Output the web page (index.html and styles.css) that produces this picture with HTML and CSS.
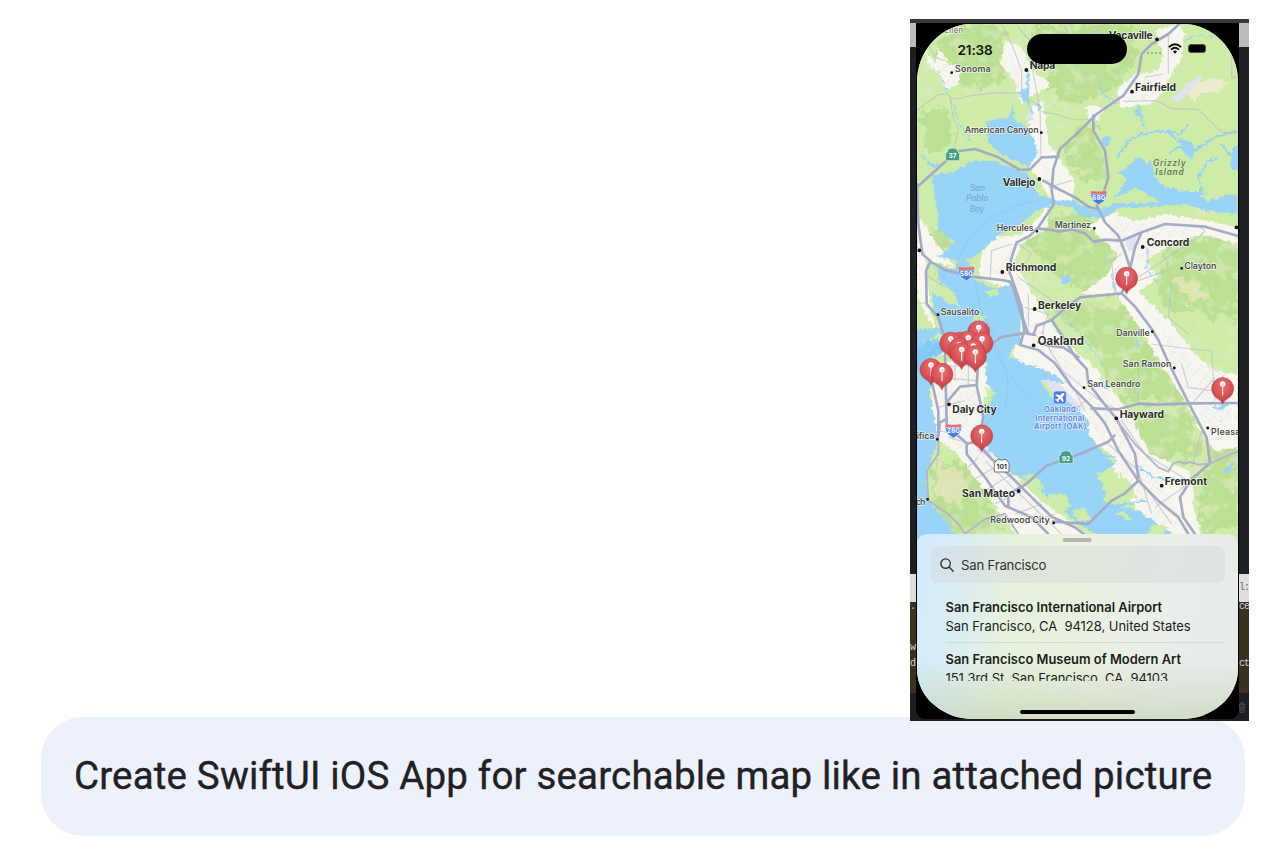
FILE: index.html
```html
<!DOCTYPE html>
<html lang="en">
<head>
<meta charset="utf-8">
<title>Searchable map prompt</title>
<link rel="stylesheet" href="styles.css">
</head>
<body>
<main class="conversation">
  <figure class="attachment">
    <span class="code c1">l:</span><span class="code c2">ce</span><span class="code c3">ct</span>
    <span class="code c4">.</span><span class="code c5">w</span><span class="code c6">d</span>
    <svg class="trash" viewBox="0 0 10 14"><path d="M1 3h8M3.500 3V1h3v2M2 3l.5 10h5L8 3M4 5v6M6 5v6"/></svg>
    <div class="phone">
      <div class="screen">
        <svg class="map" viewBox="36 30 963 1545" preserveAspectRatio="none">
          <defs>
            <filter id="coast" x="0" y="0" width="1044" height="1600" filterUnits="userSpaceOnUse">
              <feTurbulence type="fractalNoise" baseFrequency=".07" numOctaves="3" seed="4"/>
              <feDisplacementMap in="SourceGraphic" scale="18" xChannelSelector="R" yChannelSelector="G"/>
              <feGaussianBlur stdDeviation=".8"/>
            </filter>
            <filter id="hills" x="0" y="0" width="1044" height="1600" filterUnits="userSpaceOnUse">
              <feTurbulence type="fractalNoise" baseFrequency=".03" numOctaves="4" seed="9"/>
              <feDisplacementMap in="SourceGraphic" scale="75" xChannelSelector="R" yChannelSelector="G"/>
              <feGaussianBlur stdDeviation="1.800"/>
            </filter>
            <filter id="relief" x="0" y="0" width="1044" height="1600" filterUnits="userSpaceOnUse">
              <feTurbulence type="fractalNoise" baseFrequency=".028" numOctaves="4" seed="12"/>
              <feColorMatrix values="0 0 0 0 .69  0 0 0 0 .84  0 0 0 0 .52  5 0 0 0 -2.5"/>
              <feComposite in2="SourceGraphic" operator="in"/>
              <feGaussianBlur stdDeviation="1.500"/>
            </filter>
            <pattern id="streets" width="30" height="26" patternUnits="userSpaceOnUse" patternTransform="rotate(35)">
              <path d="M0 5H30M10 0V26M10 17H30" fill="none" stroke="#e2e2e8" stroke-width="2"/>
            </pattern>
            <radialGradient id="ball" cx=".5" cy=".3" r=".75"><stop offset="0" stop-color="#ea7476"/><stop offset=".55" stop-color="#d85054"/><stop offset="1" stop-color="#bb393f"/></radialGradient>
            <g id="pin">
              <path d="M0 46C-5 34-12 31-18 27A33 33 0 1 1 18 27C12 31 5 34 0 46Z" fill="url(#ball)" stroke="#b53c40" stroke-width="1"/>
              <path d="M0-8V19" stroke="#fbe9e9" stroke-width="3.500" stroke-linecap="round"/>
              <circle cy="-14" r="8" fill="#fff"/><circle cx="1" cy="-12" r="4" fill="#f5d5d6"/>
            </g>
            <g id="interstate">
              <path d="M-24-8C-23 9-14 17 0 24C14 17 23 9 24-8Z" fill="#467de3" stroke="#e5edf9" stroke-width="2"/>
              <path d="M-23-18Q0-14 23-18L25-8H-25Z" fill="#ec6969" stroke="#f5e5e5" stroke-width="1"/>
            </g>
          </defs>

          <rect width="1044" height="1600" fill="#cdeca8"/>
          <g filter="url(#hills)" fill="#bbdf93">
            <path d="M150 30H290L310 110 290 190 240 225 160 220 130 150 90 100Z"/>
            <path d="M370 30H700L690 130 640 210 590 250 520 270 440 250 420 190 440 150Z"/>
            <path d="M510 355L560 320 590 420 600 490 530 500 480 440Z"/>
            <path d="M50 300L110 280 150 340 130 400 60 410Z"/>
            <path d="M460 600L540 590 640 700 620 830 530 830 440 760 370 710 390 650Z"/>
            <path d="M800 700L900 660 998 640V920L900 900 800 880 740 840 770 760Z"/>
            <path d="M450 890L580 860 680 890 740 990 700 1120 610 1110 570 1000Z"/>
            <path d="M690 1010L760 1020 830 1130 820 1170 650 1160Z"/>
            <path d="M690 1220L850 1190 890 1320 800 1330 760 1370 680 1260Z"/>
            <path d="M930 1280L998 1250V1560H890L880 1450Z"/>
            <path d="M80 1340L170 1340 260 1430 280 1560H160L80 1470Z"/>
            <path d="M36 650L120 650 150 680 110 705 50 690ZM40 740L70 780 60 850 36 850Z"/>
          </g>
          <path filter="url(#relief)" opacity=".6" fill="#000" d="M36 30H710L660 240 570 310 610 500 500 490 460 400 420 270 240 250 100 300 36 250ZM370 650L500 580 650 700 640 830 760 930 998 900V1560H830L720 1280 600 1110 420 920 330 740ZM740 830L740 730 998 620V950ZM80 1340L170 1340 300 1560H150ZM36 650L160 650 60 930 36 900Z"/>
          <g filter="url(#hills)" fill="#e5e6ba" opacity=".8">
            <path d="M800 800L850 790 910 850 880 860 820 840ZM100 1350L160 1360 190 1430 150 1480 90 1440ZM860 560L940 580 940 600 870 600Z"/>
            <path d="M890 750L950 760 930 770ZM850 1250L880 1280 870 1300Z"/>
          </g>
          <path filter="url(#coast)" fill="#eeeccf" d="M840 205H880L930 192 970 205 940 235 890 235 870 265 845 240Z"/>

          <!-- built-up areas -->
          <g filter="url(#coast)" fill="#f8f7ef">
            <path d="M300 80L350 100 390 180 440 210 390 240 350 270 330 200 285 150Z"/>
            <path d="M100 100L130 150 170 160 160 210 125 230 90 160ZM60 110L100 160 75 165Z"/>
            <path d="M750 50L820 30 840 60 830 130 800 180 770 240 740 270 650 280 635 230 690 180 760 170 775 120Z"/>
            <path d="M375 280L415 260 430 390 470 440 510 500 500 560 440 560 370 450 370 350Z"/>
            <path d="M540 275L600 280 580 320 550 320Z"/>
            <path d="M430 565L410 600 350 660 270 670 230 720 220 790 320 830 350 980 320 1010 340 1050 430 1070 500 1160 550 1260 590 1330 650 1400 720 1530 830 1570 890 1570 850 1420 750 1350 680 1210 610 1110 550 1040 480 990 420 900 360 800 330 740 350 690 430 640Z"/>
            <path d="M550 640L610 590 690 620 800 600 998 640V690L890 660 800 690 720 740 760 790 700 830 790 920 870 1020 930 1070 998 1080V1240L950 1220 890 1250 840 1160 770 1050 690 920 630 840 530 840 600 790 640 720Z"/>
            <path d="M870 1230L998 1220V1300L930 1310ZM740 1320L850 1370 870 1450 830 1520 700 1410Z"/>
            <path d="M36 600L90 680 150 760 60 740 80 900 110 990 36 850Z"/>
            <path d="M90 1010L230 1000 260 1120 230 1170 240 1270 300 1360 420 1470 560 1570H340L260 1460 160 1320 90 1270 75 1090Z"/>
          </g>
          <path fill="url(#streets)" opacity=".75" d="M310 110L370 200 380 260 340 240ZM110 150H155V210H110ZM660 260L700 180 770 180 750 260ZM400 440L460 480 480 530 440 540ZM240 770L325 700 340 740 350 860 450 1010 600 1130 850 1540H760L620 1320 520 1170 370 990 330 810ZM600 620L900 640 790 680 720 740 640 720ZM750 900L850 1030 980 1090V1210L900 1230 840 1130ZM110 1040L220 1010 220 1170 260 1320 440 1500 390 1540 250 1410 120 1250Z"/>
          <path fill="#dfe3f1" d="M795 255L880 185 895 190 820 265ZM410 1095L450 1095 535 1185 500 1200ZM660 670L695 660 690 710 670 710ZM375 290L390 320 360 315ZM230 1290L265 1310 250 1330 215 1310Z"/>

          <!-- bays, straits and ocean -->
          <g filter="url(#coast)" fill="#97d4f8">
            <path d="M80 480L140 475 210 440 270 440 350 475 380 490 400 540 450 560 510 560 560 590 610 580 670 490 740 440 750 490 830 530 998 545V600L900 590 840 570 720 580 650 580 600 610 540 610 490 575 445 570 395 590 340 635 290 660 250 690 225 720 185 735 205 760 190 780 215 800 275 825 310 810 335 830 350 890 345 950 350 980 320 1005 310 1030 340 1040 400 1060 460 1090 480 1110 420 1095 405 1100 440 1150 500 1170 550 1220 550 1260 590 1310 635 1340 610 1370 580 1390 600 1440 620 1470 700 1490 820 1575H600L520 1530 430 1450 360 1400 300 1360 250 1305 230 1270 235 1210 270 1140 245 1110 240 1030 150 990 100 960 30 1000V948L110 940 90 900 80 830 120 860 165 880 150 840 100 800 100 755 150 765 160 740 90 725 130 710 150 680 100 650 100 610Z"/>
            <path d="M20 1000L100 970 120 1010 80 1030 75 1150 100 1270 80 1330 65 1370 70 1460 130 1530 170 1590H20Z"/>
            <path d="M245 320L310 310 360 335 385 370 400 420 370 460 290 420 250 390ZM310 320L325 270 330 310Z"/>
            <path d="M590 370L620 370 610 390 590 400ZM640 480L700 430 730 450 720 520ZM985 400L1010 390V480L975 460Z"/>
            <path d="M820 370L860 385 870 430 850 430 830 405ZM690 290L700 280 710 310 695 310ZM560 45L590 60 580 70ZM340 235L365 220 375 245 365 270 350 255Z"/>
            <path d="M465 790L495 780 500 800 475 815ZM580 1080L615 1130 600 1120ZM690 970L705 995 695 1000ZM920 1180L970 1170 950 1190ZM950 1375L990 1340 970 1380Z"/>
            <path d="M40 410L70 440 110 455 80 465ZM390 265L410 275 400 290Z"/>
          </g>
          <path filter="url(#hills)" d="M10 1000L100 985 130 970 120 1010 60 1050 20 1100Z" fill="#64c0f4" opacity=".45"/>
          <g filter="url(#coast)" fill="#cdeca8">
            <path d="M200 915L225 900 245 910 220 925ZM240 830L275 825 280 845 255 845ZM615 565L690 520 760 560 700 570ZM750 490L830 520 780 520ZM570 1380L625 1360 630 1390ZM590 1450L640 1430 650 1460 610 1480ZM630 1500L660 1490 680 1520ZM430 1440L480 1440 500 1480 450 1500ZM500 1490L540 1480 560 1520 520 1520ZM350 1385L385 1380 420 1420 390 1430ZM880 545L940 530 960 545 910 560ZM740 1530L790 1540 770 1570H720Z"/>
            <path d="M85 1030L130 1020 160 1035 120 1045 85 1060ZM570 1290L605 1310 640 1350 600 1330ZM640 1370L680 1410 700 1460 660 1440ZM240 1120L262 1135 250 1160Z"/>
          </g>
          <!-- creeks and sloughs -->
          <g filter="url(#coast)" fill="none" stroke="#93d2f7" stroke-width="6">
            <path d="M640 430L670 380 710 360 760 350 830 360 850 330M790 420L820 400 870 410 930 370 998 350M890 540L880 490 910 440 940 430M980 430L950 390M830 390L780 350M370 170V270L385 300"/>
            <path d="M100 170L140 260 160 320 200 390" stroke-width="3"/>
            <path d="M575 170L590 240 640 270M700 270L720 350" stroke-width="3"/>
            <path d="M640 850L620 790 640 760M450 890L520 950 600 1060M730 700L725 770 760 810M840 80L870 65 998 70" stroke-width="3"/>
            <path d="M560 1320L630 1330M600 1480L720 1460M690 1350L740 1390 850 1400M540 1520L580 1560" stroke-width="5"/>
          </g>
          <g fill="none" stroke="#78bbea" stroke-width="2" opacity=".6">
            <path d="M395 560Q250 590 190 680T175 770L210 800 230 900 270 960M80 755L200 870 245 960M260 980Q330 1080 300 1180L240 1230M250 970Q310 1110 450 1230"/>
          </g>

          <!-- secondary roads -->
          <g class="minor">
            <path d="M36 290L60 270 100 242 125 240 145 255 200 245 270 236 350 238 370 255 405 275 408 430M65 80L90 130 120 140M135 250L145 310 160 350 145 410M290 30L320 90 350 170V240M375 80L385 180 405 280M340 40L375 80M480 35L500 100 570 150M150 175L180 165"/>
            <path d="M410 293L450 300 510 318 560 315M655 262L755 260 800 284 880 286 950 355 998 358M790 60V180M980 100V190H998M775 180L720 190M500 500L430 520"/>
            <path d="M320 690L260 710 255 800M340 690L380 720 360 750M340 790L430 850 490 900M415 930V980M370 840V940M390 930L420 930M360 880L430 900 410 960M630 840L620 740 650 720M700 800L740 785 790 770M700 790L760 750 830 700 880 670 900 650 885 640M800 810L790 910 850 960M740 990L860 1005 920 1010 930 1160M700 1060V1170M830 1050L850 1120 920 1130 960 1080M860 1170L930 1090"/>
            <path d="M430 1000L510 1130 540 1190M460 1060L610 1180M540 1160L500 1200M600 1170L690 1210M650 1220L720 1320 850 1400M610 1290L700 1370 740 1500M700 1390L800 1530M900 1340L998 1300M890 1250L860 1360M850 1410L750 1480"/>
            <path d="M120 1020H220M110 1060L210 1050M90 1090L220 1100M150 1010V1100M190 1000V1120M100 1180L180 1160M180 1370L220 1330M200 1400L270 1360M240 1430L320 1380M270 1470L350 1430M330 1500L410 1470M360 1530L450 1500M240 1340L480 1570M130 1270L200 1290"/>
            <path d="M36 700L60 720M40 870L65 865M60 780L120 820M100 1250L145 1260"/>
          </g>
          <path class="highway thin" d="M100 1280L100 1320 65 1370 70 1460 130 1500 160 1530 180 1560 240 1515 300 1500 340 1560"/>

          <!-- highways -->
          <g class="highway">
            <path d="M36 520L80 480 140 425 155 412 210 405 280 430 345 468 375 466 410 430 460 428"/>
            <path d="M825 28L790 60 740 90 710 120 700 180 655 245 575 300 525 350 465 405 445 465 440 530 447 570 400 640 375 665 335 685 320 730 312 770 330 820 350 880 358 957"/>
            <path d="M565 305V350L600 410 610 490 590 555 575 575 600 625 640 665 660 715 678 770 665 800 650 838 690 878 740 945 760 978 790 1045 850 1165 905 1270 915 1348 860 1395 825 1450 835 1510 870 1560"/>
            <path d="M415 500L460 525 510 550 550 578 575 585M397 643L440 648 460 653 500 646 540 658 565 683 600 677 650 680 710 655 780 630 900 638 998 665M710 655L690 700 675 765"/>
            <path d="M36 510L40 630 52 720 80 745 120 768 200 788 290 798 315 803 325 820 345 890 370 960"/>
            <path d="M75 745L63 770 65 870 100 910 115 960"/>
            <path d="M385 962L395 935 440 918 480 883 525 850 600 843 650 838M440 918L470 963 510 1028 545 1065 550 1108 590 1160 635 1215 690 1320 700 1390"/>
            <path d="M260 990L290 969 360 957 390 963M355 960L345 993 400 1008 450 1048 500 1118 560 1178 600 1228 640 1310 700 1400 760 1460 820 1510 850 1560M400 985L430 995 475 1000 520 1030"/>
            <path d="M560 1183L640 1186 700 1169 760 1172 850 1168 998 1167"/>
            <path d="M120 1020L125 1230 150 1258 185 1288V1320L240 1390 300 1475 380 1510 430 1560M220 1040L215 1115 235 1208 218 1290 260 1335 320 1390 380 1450 440 1508 510 1540 550 1570M125 1165L165 1118 215 1113M185 1290L220 1280"/>
            <path d="M80 1100L100 1190 100 1260M125 1215L105 1225 98 1280M310 1480V1440L360 1413 425 1355 530 1318 610 1283 628 1265M445 1523L550 1530 620 1460 660 1438 700 1400"/>
          </g>
          <path class="highway thin" d="M640 1225L690 1290 760 1360 790 1373 805 1348 825 1342 835 1350 855 1344 880 1352 915 1348 998 1312"/>

          <g class="shields">
            <path d="M122 440V419Q128 415 130 405Q143 399 156 405Q158 415 164 419V440Z" fill="#3fa083" stroke="#e5f5ec" stroke-width="2"/><text x="143" y="432">37</text>
            <use href="#interstate" x="581" y="548"/><text x="581" y="557">680</text>
            <use href="#interstate" x="184" y="776"/><text x="184" y="785">580</text>
            <use href="#interstate" x="145" y="1248"/><text x="145" y="1257">280</text>
            <path d="M462 1348V1327Q468 1323 470 1313Q483 1307 496 1313Q498 1323 504 1327V1348Z" fill="#3fa083" stroke="#e5f5ec" stroke-width="2"/><text x="483" y="1340">92</text>
            <path d="M273 1340L280 1336Q290 1341 300 1336L307 1340Q315 1348 312 1360V1374H268V1360Q265 1348 273 1340Z" fill="#fff" stroke="#555" stroke-width="2.500"/><text x="290" y="1365" class="route">101</text>
            <rect x="445" y="1131" width="39" height="39" rx="8" fill="#477ee9" stroke="#d9e7ff" stroke-width="2"/>
            <path d="M477 1138C473 1135 469 1140 466 1144L453 1141 451 1144 461 1151 457 1156 452 1156 450 1158 456 1161 459 1166 461 1164 461 1159 466 1155 473 1165 476 1162 472 1149C477 1145 480 1141 477 1138Z" fill="#fff"/>
          </g>

          <g class="dots">
            <path class="dot-l" d="M364 168h0M756 76h0M681 233h0M403 495h0M713 699h0M292 774h0M389 885h0M386 994h0M132 1171h0M634 1213h0M341 1431h0M770 1415h0M43 709h0M994 640h0"/>
            <path class="dot-s" d="M140 176h0M908 1242h0M446 1527h0M409 356h0M396 652h0M568 643h0M830 763h0M99 902h0M742 953h0M808 1062h0M537 1121h0M97 1276h0M68 1456h0"/>
          </g>
          <g class="city">
            <text x="374" y="166" textLength="77">Napa</text><text x="611" y="76" textLength="132">Vacaville</text>
            <text x="690" y="231" textLength="123">Fairfield</text><text x="293" y="515" textLength="98">Vallejo</text>
            <text x="725" y="697" textLength="128">Concord</text><text x="302" y="772" textLength="152">Richmond</text>
            <text x="399" y="886" textLength="130">Berkeley</text><text x="398" y="992" textLength="139" class="big">Oakland</text>
            <text x="142" y="1196" textLength="133">Daly City</text><text x="644" y="1211" textLength="133">Hayward</text>
            <text x="171" y="1449" textLength="159">San Mateo</text><text x="779" y="1413" textLength="127">Fremont</text>
          </g>
          <g class="town">
            <text x="97" y="57" textLength="77" class="faint">n Ellen</text><text x="150" y="175" textLength="107">Sonoma</text>
            <text x="179" y="356" textLength="222">American Canyon</text><text x="275" y="652" textLength="111">Hercules</text>
            <text x="449" y="643" textLength="109">Martinez</text><text x="838" y="764" textLength="96">Clayton</text>
            <text x="107" y="903" textLength="116">Sausalito</text><text x="634" y="967" textLength="100">Danville</text>
            <text x="653" y="1060" textLength="146">San Ramon</text><text x="547" y="1119" textLength="159">San Leandro</text>
            <text x="918" y="1263" textLength="88">Pleasa</text><text x="35" y="1276" textLength="53">ifica</text>
            <text x="256" y="1527" textLength="178">Redwood City</text><text x="32" y="1474" textLength="29">ch</text>
          </g>
          <g class="nature">
            <text x="744" y="455" textLength="98">Grizzly</text><text x="751" y="482" textLength="85">Island</text>
          </g>
          <g class="bay">
            <text x="195" y="532" textLength="45">San</text><text x="183" y="562" textLength="67">Pablo</text><text x="194" y="593" textLength="44">Bay</text>
          </g>
          <g class="airport">
            <text x="417" y="1194" textLength="95">Oakland</text><text x="391" y="1220" textLength="147">International</text><text x="387" y="1245" textLength="157">Airport (OAK)</text>
          </g>
          <g class="pins">
            <use href="#pin" x="665" y="793"/><use href="#pin" x="221" y="954"/><use href="#pin" x="165" y="988"/><use href="#pin" x="137" y="988"/>
            <use href="#pin" x="190" y="985"/><use href="#pin" x="231" y="988"/><use href="#pin" x="163" y="1006"/><use href="#pin" x="205" y="1010"/>
            <use href="#pin" x="170" y="1020"/><use href="#pin" x="211" y="1028"/><use href="#pin" x="78" y="1067"/><use href="#pin" x="111" y="1081"/>
            <use href="#pin" x="230" y="1266"/><use href="#pin" x="953" y="1124"/>
          </g>
        </svg>

        <section class="sheet">
          <div class="grabber"></div>
          <div class="search">
            <svg viewBox="0 0 14 14"><circle cx="5.600" cy="5.600" r="4.700"/><path d="M9.100 9.100L13.200 13.200"/></svg>
            <span>San Francisco</span>
          </div>
          <div class="results">
            <article class="result"><h2>San Francisco International Airport</h2><p>San Francisco, CA&nbsp; 94128, United States</p></article>
            <article class="result second"><h2>San Francisco Museum of Modern Art</h2><p>151 3rd St, San Francisco, CA&nbsp; 94103</p></article>
          </div>
          <div class="home"></div>
        </section>

        <header class="status">
          <time>21:38</time>
          <div class="island"></div>
          <div class="signals">
            <i></i><i></i><i></i><i></i>
            <svg class="wifi" viewBox="0 0 14 11"><path d="M.8 4.100Q7-1.800 13.200 4.100M3 6.600Q7 2.900 11 6.600" fill="none" stroke="#10160c" stroke-width="1.900"/><path d="M4.900 8.400Q7 6.500 9.100 8.400L7 10.700Z" fill="#10160c"/></svg>
            <b class="battery"></b>
          </div>
        </header>
      </div>
    </div>
  </figure>
  <div class="bubble"><p>Create SwiftUI iOS App for searchable map like in attached picture</p></div>
</main>
</body>
</html>
```

FILE: styles.css
```css
* { box-sizing: border-box; }
body { margin: 0; background: #fff; font-family: Inter, "Liberation Sans", sans-serif; overflow: hidden; }
.conversation { width: 1282px; height: 844px; padding: 19px 33px 0 41px; display: flex; flex-direction: column; }
.attachment {
  position: relative; z-index: 1; align-self: flex-end; width: 339px; height: 702px; flex: none;
  margin: 0; padding: 4px 10px 2px 6px; overflow: hidden;
  background: linear-gradient(#383838 4px, #bcbcbc 4px 28px, #1f2024 28px 555px, #dedede 555px 583px, #3a3121 583px 674px, #1d1e22 674px);
}
.phone { height: 696px; padding: 1px; background: #000; border-radius: 0 0 9px 9px; }
.screen {
  position: relative; height: 695px; border-radius: 55px 55px 56px 56px / 58px 58px 50px 50px;
  overflow: hidden; background: #cdeca8; display: flex; flex-direction: column;
}
.map { width: 321px; height: 515px; flex: none; display: block; }
.minor { fill: none; stroke: #bdbfcb; stroke-width: 3.500; stroke-linejoin: round; opacity: .7; }
.highway { fill: none; stroke: #a4acc5; stroke-width: 8; stroke-linejoin: round; stroke-linecap: round; }
.highway.thin { stroke: #b3b7c8; stroke-width: 6; }
.map text { paint-order: stroke; stroke-linejoin: round; }
.city text { font-size: 31px; font-weight: 700; fill: #2a2d28; stroke: rgba(255,255,255,.75); stroke-width: 4px; }
.city .big { font-size: 34px; }
.town text { font-size: 26.500px; font-weight: 600; fill: #4b4e48; stroke: rgba(255,255,255,.75); stroke-width: 4px; }
.town .faint { font-size: 23px; font-weight: 500; fill: #777d70; }
.nature text { font-size: 25px; font-style: italic; font-weight: 600; fill: #6c7568; }
.bay text { font-size: 25px; font-style: italic; font-weight: 600; fill: #7fb0cc; }
.airport text { font-size: 23px; font-weight: 600; fill: #5b7fd3; stroke: rgba(235,245,255,.85); stroke-width: 4px; }
.shields text { font-size: 20px; font-weight: 700; text-anchor: middle; fill: #fff; }
.shields .route { fill: #333; }
.dots path { fill: none; stroke: #161616; stroke-linecap: round; }
.dots .dot-l { stroke-width: 11.500; }
.dots .dot-s { stroke-width: 8.500; }
.pins use { filter: drop-shadow(0 2px 2px rgba(70,30,30,.3)); }

.status { position: absolute; inset: 10px 0 auto; height: 30px; }
.status time { position: absolute; left: 40.500px; top: 7.500px; font-size: 13.500px; line-height: 16px; font-weight: 600; letter-spacing: -.1px; color: #10160c; }
.island { position: absolute; left: 110px; top: 0; width: 100px; height: 30px; border-radius: 15px; background: #000; }
.signals { position: absolute; left: 230px; top: 7.500px; height: 14px; display: flex; align-items: center; gap: 2px; }
.signals i { width: 2px; height: 2px; border-radius: 1px; background: #87a36a; margin-top: 9px; }
.wifi { width: 14px; height: 11px; margin-left: 5px; }
.battery { width: 18px; height: 9px; margin-left: 4px; background: #050505; border: 1px solid #4b5940; border-radius: 3px; }

.sheet {
  position: relative; height: 185px; margin-top: -5px; flex: none; border-radius: 10px 10px 0 0; padding: 4px 13px 5px 12.500px;
  display: flex; flex-direction: column;
  background: linear-gradient(rgba(200,215,190,0) 68%, rgba(192,209,174,.6)), linear-gradient(97deg, #d4ebfe 0, #d9eef3 14%, #e5f2dc 29%, #eaf1df 52%, #e9eeea 75%, #e8ece9);
}
.grabber { width: 29px; height: 4px; margin: 0 auto; background: #aeb7b2; border-radius: 2px; flex: none; transform: translateX(-.4px); }
.search { display: flex; align-items: center; height: 37px; flex: none; margin-top: 4px; padding-left: 10px; gap: 7.500px; border-radius: 8px; background: rgba(208,208,214,.34); font-size: 13.200px; letter-spacing: -.22px; color: #30332f; }
.search svg { width: 14px; height: 14px; fill: none; stroke: #30332f; stroke-width: 1.400; stroke-linecap: round; }
.results { margin: 13.500px 0 0 16px; height: 84px; overflow: hidden; flex: none; color: #1b1e19; }
.result { height: 46.500px; padding-top: 1px; border-bottom: 1px solid rgba(140,150,140,.22); }
.result h2 { margin: 0; font-size: 12.900px; line-height: 19px; font-weight: 600; letter-spacing: 0; white-space: nowrap; }
.result p { margin: 0; font-size: 13px; line-height: 19px; white-space: nowrap; letter-spacing: -.04px; }
.result.second { padding-top: 7px; border: 0; }
.home { width: 115px; height: 4.500px; margin: auto auto 0; border-radius: 3px; background: #000; }

.code { position: absolute; font: 10px/14px "Liberation Mono", monospace; color: #d5d0c6; }
.c1 { left: 329px; top: 562px; color: #666; letter-spacing: -1px; }
.c2 { left: 329px; top: 581px; letter-spacing: -1px; }
.c3 { left: 329px; top: 638px; letter-spacing: -1px; }
.c4 { left: 0; top: 581px; }
.c5 { left: 0; top: 622px; }
.c6 { left: 0; top: 638px; }
.trash { position: absolute; left: 328px; top: 682px; width: 8px; height: 13px; fill: none; stroke: #55565a; }
.bubble { width: 1204px; height: 119px; margin-top: -4px; flex: none; border-radius: 42px; background: #edf1fb; display: flex; align-items: center; padding: 0 0 2px 33px; }
.bubble p { margin: 0; font-family: Roboto, sans-serif; font-size: 38.500px; line-height: 46px; color: #1f2125; white-space: nowrap; letter-spacing: .17px; -webkit-text-stroke: .4px #1f2125; }
```
